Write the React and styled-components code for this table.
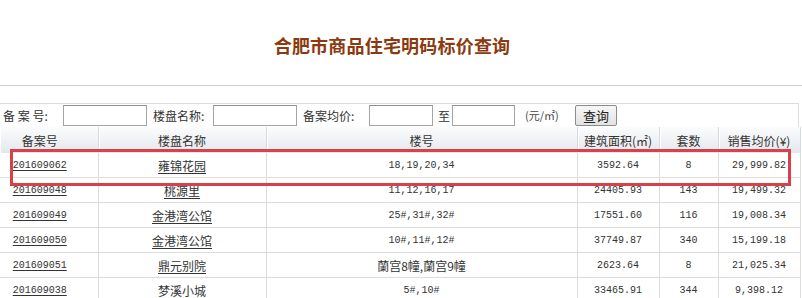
import React from "react";
import styled, { createGlobalStyle } from "styled-components";

const GlobalStyle = createGlobalStyle`
  html, body {
    margin: 0;
    padding: 0;
    background: #fff;
  }
  body {
    font-family: "Noto Sans CJK SC", "Liberation Sans", sans-serif;
    font-size: 12px;
    color: #333;
    overflow: hidden;
  }
`;

const Page = styled.div`
  width: 802px;
  height: 298px;
  overflow: hidden;
`;

const TitleBar = styled.div`
  height: 86px;
  display: flex;
  align-items: center;
  justify-content: center;
  padding-top: 5px;
  box-sizing: border-box;
  border-bottom: 1px solid #cfcfcf;
`;

const Title = styled.h1`
  margin: 0 0 0 -18px;
  font-size: 18px;
  font-weight: bold;
  letter-spacing: 0.2px;
  color: #8b3a10;
`;

const SearchRow = styled.div`
  margin-top: 17px;
  width: 799px;
  height: 24px;
  box-sizing: border-box;
  border-top: 1px solid #dcdcdc;
  border-right: 1px solid #dcdcdc;
  display: flex;
  align-items: flex-start;
  padding: 1px 0 0 3px;
`;

const Label = styled.span`
  width: ${(p) => p.$w}px;
  flex: none;
  height: 21px;
  line-height: 21px;
  font-size: 12px;
  color: #333;
  white-space: pre;
`;

const Field = styled.input`
  flex: none;
  width: ${(p) => p.$w || 84}px;
  height: 21px;
  margin: 0 ${(p) => p.$gap || 0}px 0 0;
  padding: 0;
  box-sizing: border-box;
  border: 1px solid #a5a5a5;
  border-top-color: #8f8f8f;
  background: #fff;
`;

const Unit = styled.span`
  width: 55px;
  flex: none;
  height: 21px;
  line-height: 20px;
  font-size: 11px;
  color: #444;
  padding-left: 5px;
  box-sizing: border-box;
`;

const Button = styled.button`
  flex: none;
  width: 42px;
  height: 21px;
  padding: 0;
  font-family: "Noto Sans CJK SC", sans-serif;
  font-size: 13px;
  line-height: 19px;
  color: #222;
  border: 1px solid #8c8c8c;
  border-radius: 2px;
  background: linear-gradient(#f7f7f7, #e2e2e2);
`;

const TableWrap = styled.div`
  position: relative;
`;

const Table = styled.table`
  width: 800px;
  table-layout: fixed;
  border-collapse: collapse;
`;

const HeadCell = styled.th`
  height: 26px;
  padding: 0 ${(p) => p.$pr || 0}px 0 0;
  font-weight: normal;
  font-size: 12px;
  color: #333;
  text-align: center;
  background: linear-gradient(#fbfcfd, #e3e7ec);
  border-right: 1px solid #d6dbe0;
  box-shadow: inset 1px 0 0 #fff;
`;

const Cell = styled.td`
  height: 24px;
  padding: 0 ${(p) => p.$pr || 0}px 0 0;
  text-align: center;
  color: #333;
  border: 1px solid #dcdcdc;
  border-left: ${(p) => (p.$first ? "none" : "1px solid #dcdcdc")};
  border-top: none;
  white-space: nowrap;
  font-family: ${(p) =>
    p.$mono ? '"Liberation Mono", "Noto Sans CJK SC", monospace' : '"Noto Sans CJK SC", sans-serif'};
  font-size: ${(p) => (p.$mono ? "10px" : "12px")};
`;

const Link = styled.a`
  color: #333;
  text-decoration: underline;
  text-underline-offset: 2px;
`;

const Highlight = styled.div`
  position: absolute;
  left: 10px;
  top: 22px;
  width: 781px;
  height: 37px;
  box-sizing: border-box;
  border: 3px solid #d8404a;
  pointer-events: none;
`;

const cols = [98, 168, 311, 82, 59, 82];

const rows = [
  ["201609062", "雍锦花园", "18,19,20,34", "3592.64", "8", "29,999.82"],
  ["201609048", "桃源里", "11,12,16,17", "24405.93", "143", "19,499.32"],
  ["201609049", "金港湾公馆", "25#,31#,32#", "17551.60", "116", "19,008.34"],
  ["201609050", "金港湾公馆", "10#,11#,12#", "37749.87", "340", "15,199.18"],
  ["201609051", "鼎元别院", "蘭宫8幢,蘭宫9幢", "2623.64", "8", "21,025.34"],
  ["201609038", "梦溪小城", "5#,10#", "33465.91", "344", "9,398.12"],
];

export default function App() {
  return (
    <Page>
      <GlobalStyle />
      <TitleBar>
        <Title>合肥市商品住宅明码标价查询</Title>
      </TitleBar>

      <SearchRow>
        <Label $w={60}>备 案 号:</Label>
        <Field $gap={6} />
        <Label $w={60}>楼盘名称:</Label>
        <Field $gap={6} />
        <Label $w={66}>备案均价:</Label>
        <Field $w={64} $gap={5} />
        <Label $w={14}>至</Label>
        <Field $w={63} $gap={5} />
        <Unit>(元/㎡)</Unit>
        <Button>查询</Button>
      </SearchRow>

      <TableWrap>
        <Table>
          <colgroup>
            {cols.map((w, i) => (
              <col key={i} style={{ width: w }} />
            ))}
          </colgroup>
          <thead>
            <tr>
              <HeadCell $pr={18}>备案号</HeadCell>
              <HeadCell>楼盘名称</HeadCell>
              <HeadCell>楼号</HeadCell>
              <HeadCell>建筑面积(㎡)</HeadCell>
              <HeadCell>套数</HeadCell>
              <HeadCell>销售均价(¥)</HeadCell>
            </tr>
          </thead>
          <tbody>
            {rows.map((r) => (
              <tr key={r[0]}>
                <Cell $first $mono $pr={18}>
                  <Link>{r[0]}</Link>
                </Cell>
                <Cell>
                  <Link>{r[1]}</Link>
                </Cell>
                <Cell $mono={!/[\u4e00-\u9fff]/.test(r[2])}>{r[2]}</Cell>
                <Cell $mono>{r[3]}</Cell>
                <Cell $mono>{r[4]}</Cell>
                <Cell $mono>{r[5]}</Cell>
              </tr>
            ))}
          </tbody>
        </Table>
        <Highlight />
      </TableWrap>
    </Page>
  );
}
